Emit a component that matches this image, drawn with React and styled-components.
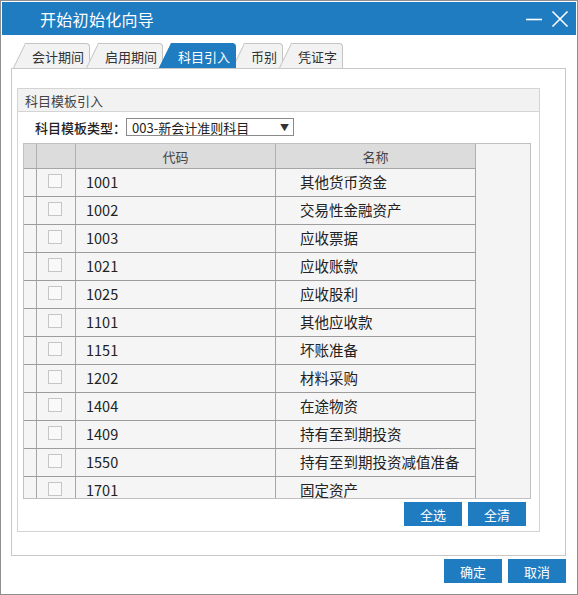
import React from 'react';
import styled, { createGlobalStyle } from 'styled-components';

const GlobalStyle = createGlobalStyle`
  html, body {
    margin: 0;
    padding: 0;
    background: #ffffff;
  }
  body {
    font-family: "Noto Sans CJK SC", "Noto Sans", sans-serif;
  }
`;

const tabs = ['会计期间', '启用期间', '科目引入', '币别', '凭证字'];

const accounts = [
  ['1001', '其他货币资金'],
  ['1002', '交易性金融资产'],
  ['1003', '应收票据'],
  ['1021', '应收账款'],
  ['1025', '应收股利'],
  ['1101', '其他应收款'],
  ['1151', '坏账准备'],
  ['1202', '材料采购'],
  ['1404', '在途物资'],
  ['1409', '持有至到期投资'],
  ['1550', '持有至到期投资减值准备'],
  ['1701', '固定资产'],
];

function App() {
  return (
    <>
      <GlobalStyle />
      <Window>
        <TitleBar>
          <Title>开始初始化向导</Title>
          <WinButtons>
            <svg width="18" height="18" viewBox="0 0 18 18">
              <line x1="1" y1="9.5" x2="17" y2="9.5" stroke="#fff" strokeWidth="1.6" />
            </svg>
            <svg width="18" height="18" viewBox="0 0 18 18">
              <line x1="1.5" y1="1.5" x2="16.5" y2="16.5" stroke="#fff" strokeWidth="1.6" />
              <line x1="16.5" y1="1.5" x2="1.5" y2="16.5" stroke="#fff" strokeWidth="1.6" />
            </svg>
          </WinButtons>
        </TitleBar>

        <Body>
          <TabRow>
            {tabs.map(t => (
              <Tab key={t} $active={t === '科目引入'}>
                <span>{t}</span>
              </Tab>
            ))}
          </TabRow>

          <Panel>
            <GroupBox>
              <GroupHeader>科目模板引入</GroupHeader>
              <FieldRow>
                <FieldLabel>科目模板类型：</FieldLabel>
                <Select>
                  <span>003-新会计准则科目</span>
                  <Arrow>▼</Arrow>
                </Select>
              </FieldRow>

              <Grid>
                <GridInner>
                  <HeadRow>
                    <HeadCell />
                    <HeadCell />
                    <HeadCell>代码</HeadCell>
                    <HeadCell>名称</HeadCell>
                  </HeadRow>
                  {accounts.map(([code, name]) => (
                    <DataRow key={code}>
                      <Cell />
                      <Cell $center>
                        <CheckBox />
                      </Cell>
                      <Cell $pad="10px">{code}</Cell>
                      <Cell $pad="24px">{name}</Cell>
                    </DataRow>
                  ))}
                </GridInner>
              </Grid>

              <ButtonRow $right="13px">
                <BlueButton>全选</BlueButton>
                <BlueButton>全清</BlueButton>
              </ButtonRow>
            </GroupBox>
          </Panel>

          <ButtonRow $right="0px" $top="3px">
            <BlueButton>确定</BlueButton>
            <BlueButton>取消</BlueButton>
          </ButtonRow>
        </Body>
      </Window>
    </>
  );
}

const Window = styled.div`
  width: 578px;
  height: 595px;
  box-sizing: border-box;
  border: 1px solid #8e8e8e;
  padding: 1px;
  background: #ffffff;
  display: flex;
  flex-direction: column;
`;

const TitleBar = styled.div`
  height: 33px;
  background: #1f7cc1;
  display: flex;
  align-items: center;
  justify-content: space-between;
  padding: 0 7px 0 38px;
`;

const Title = styled.div`
  color: #ffffff;
  font-size: 16px;
  letter-spacing: 0.3px;
`;

const WinButtons = styled.div`
  display: flex;
  gap: 8px;
  align-items: center;
`;

const Body = styled.div`
  flex: 1;
  display: flex;
  flex-direction: column;
  padding: 8px 10px 0 9px;
`;

const TabRow = styled.div`
  height: 25px;
  display: flex;
  align-items: flex-end;
  padding-left: 2px;
`;

const Tab = styled.div`
  position: relative;
  height: 25px;
  padding: 0 6px 0 19px;
  margin-right: -4px;
  display: flex;
  align-items: center;
  font-size: 13px;
  color: ${p => (p.$active ? '#ffffff' : '#333333')};
  z-index: ${p => (p.$active ? 2 : 1)};

  span {
    position: relative;
    z-index: 2;
    margin-top: 2px;
  }

  &::before {
    content: '';
    position: absolute;
    left: 0;
    top: 0;
    bottom: 0;
    width: 30px;
    transform: skewX(-26deg);
    transform-origin: bottom left;
    background: ${p => (p.$active ? '#1f7cc1' : '#f2f2f2')};
    border-left: 1px solid ${p => (p.$active ? '#1f7cc1' : '#c4c4c4')};
    border-top: 1px solid ${p => (p.$active ? '#1f7cc1' : '#c4c4c4')};
    box-sizing: border-box;
  }

  &::after {
    content: '';
    position: absolute;
    left: 12px;
    right: 0;
    top: 0;
    bottom: 0;
    background: ${p => (p.$active ? '#1f7cc1' : '#f2f2f2')};
    border-top: 1px solid ${p => (p.$active ? '#1f7cc1' : '#c4c4c4')};
    border-right: 1px solid ${p => (p.$active ? '#1f7cc1' : '#c4c4c4')};
    border-top-right-radius: 4px;
    box-sizing: border-box;
  }
`;

const Panel = styled.div`
  height: 488px;
  box-sizing: border-box;
  border: 1px solid #c8c8c8;
  padding: 19px 25px 0 5px;
`;

const GroupBox = styled.div`
  height: 444px;
  box-sizing: border-box;
  border: 1px solid #d4d4d4;
  display: flex;
  flex-direction: column;
`;

const GroupHeader = styled.div`
  height: 22px;
  background: #f2f2f2;
  border-bottom: 1px solid #d4d4d4;
  font-size: 13px;
  color: #444444;
  padding-left: 7px;
  display: flex;
  align-items: center;
`;

const FieldRow = styled.div`
  display: flex;
  align-items: center;
  gap: 0;
  height: 18px;
  margin: 6px 0 7px 17px;
`;

const FieldLabel = styled.div`
  font-size: 13px;
  color: #222222;
  font-weight: 500;
`;

const Select = styled.div`
  width: 168px;
  height: 18px;
  box-sizing: border-box;
  border: 1px solid #8a8a8a;
  display: flex;
  align-items: center;
  justify-content: space-between;
  padding: 0 4px 0 5px;
  font-size: 13px;
  color: #222222;
`;

const Arrow = styled.span`
  font-size: 9px;
  color: #333333;
`;

const Grid = styled.div`
  height: 356px;
  margin: 0 8px 0 5px;
  box-sizing: border-box;
  border: 1px solid #c0c0c0;
  background: #f4f4f4;
  overflow: hidden;
`;

const GridInner = styled.div`
  width: 452px;
`;

const columns = '13px 39px 200px 200px';

const HeadRow = styled.div`
  display: grid;
  grid-template-columns: ${columns};
  height: 24px;
  background: #dcdcdc;
  border-bottom: 1px solid #a6a6a6;
`;

const HeadCell = styled.div`
  border-right: 1px solid #b0b0b0;
  display: flex;
  align-items: center;
  justify-content: center;
  font-size: 13px;
  color: #444444;
`;

const DataRow = styled.div`
  display: grid;
  grid-template-columns: ${columns};
  height: 27px;
  border-bottom: 1px solid #9c9c9c;
  background: #f5f5f5;
`;

const Cell = styled.div`
  border-right: 1px solid #a6a6a6;
  display: flex;
  align-items: center;
  justify-content: ${p => (p.$center ? 'center' : 'flex-start')};
  padding-left: ${p => p.$pad || '0'};
  padding-bottom: 3px;
  font-size: 14.5px;
  color: #222222;
`;

const CheckBox = styled.div`
  width: 12px;
  height: 12px;
  border: 1px solid #c6c6c6;
  background: #f9f9f9;
  margin-right: 3px;
`;

const ButtonRow = styled.div`
  display: flex;
  justify-content: flex-end;
  gap: 6px;
  margin-top: ${p => p.$top || '3px'};
  margin-right: ${p => p.$right};
`;

const BlueButton = styled.div`
  width: 58px;
  height: 24px;
  background: #1f7cc1;
  color: #ffffff;
  font-size: 13px;
  display: flex;
  align-items: center;
  justify-content: center;
`;

export default App;
